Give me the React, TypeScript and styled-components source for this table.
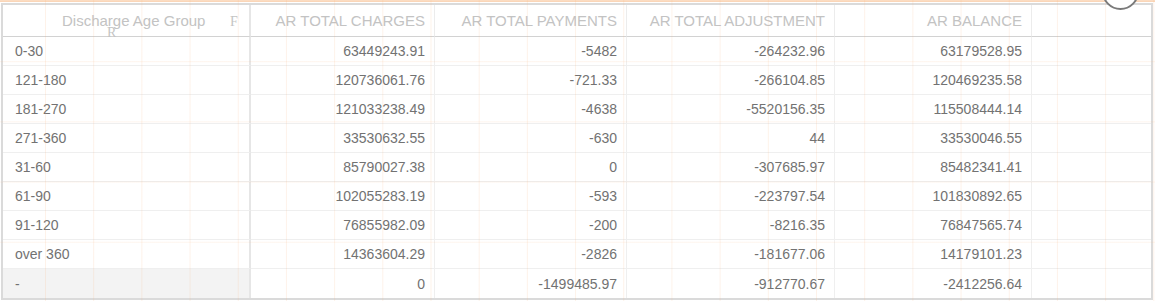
import React from "react";
import styled, { createGlobalStyle } from "styled-components";

const GlobalStyle = createGlobalStyle`
  html, body { margin: 0; padding: 0; background: #ffffff; }
  body { font-family: "Liberation Sans", Arial, sans-serif; }
`;

const Canvas = styled.div`
  position: relative;
  width: 1155px;
  height: 301px;
  overflow: hidden;
  background: #ffffff;
  padding: 3px 0 0 1px;
  box-sizing: border-box;

  &::after {
    content: "";
    position: absolute;
    inset: 0;
    pointer-events: none;
    background-image:
      linear-gradient(to right, rgba(248, 170, 110, 0.15) 1px, transparent 1px),
      linear-gradient(to bottom, rgba(248, 170, 110, 0.12) 1px, transparent 1px);
    background-size: 48.2px 100%, 100% 60.2px;
    background-position: 45px 0, 0 1px;
    box-shadow: inset 0 2px 0 rgba(246, 178, 120, 0.45);
  }
`;

const Visual = styled.div`
  width: 1152px;
  height: 297px;
  box-sizing: border-box;
  border: 2px solid #dadada;
  overflow: hidden;
`;

const Table = styled.div`
  display: grid;
  grid-template-columns: 248px 184px 192px 208px 197px 1fr;
  grid-template-rows: 32px repeat(9, 29px);
`;

const HeaderCell = styled.div<{ $align: "left" | "right"; $first?: boolean }>`
  position: relative;
  box-sizing: border-box;
  display: flex;
  align-items: center;
  justify-content: ${(p) => (p.$align === "right" ? "flex-end" : "flex-start")};
  padding: ${(p) => (p.$first ? "0 0 0 59px" : "0 9px 0 0")};
  border-bottom: 1px solid #d2d2d2;
  border-right: ${(p) => (p.$first ? "2px solid #e6e6e6" : "1px solid #ececec")};
  font-size: 15px;
  line-height: 15px;
  color: #c3c3c3;
  white-space: nowrap;
`;

const LastHeader = styled.div`
  border-bottom: 1px solid #d2d2d2;
`;

const SortGlyph = styled.span<{ $x: number; $y: number }>`
  position: absolute;
  left: ${(p) => p.$x}px;
  top: ${(p) => p.$y}px;
  font-family: "Liberation Serif", "Times New Roman", serif;
  font-size: 14px;
  line-height: 9px;
  color: #c4c4c4;
`;

const Cell = styled.div<{ $align: "left" | "right"; $first?: boolean; $shade?: boolean; $last?: boolean }>`
  box-sizing: border-box;
  display: flex;
  align-items: center;
  justify-content: ${(p) => (p.$align === "right" ? "flex-end" : "flex-start")};
  padding: ${(p) => (p.$first ? "0 0 0 12px" : "0 9px 0 0")};
  border-bottom: ${(p) => (p.$last ? "none" : "1px solid #efefef")};
  border-right: ${(p) => (p.$first ? "2px solid #e6e6e6" : "1px solid #efefef")};
  background: ${(p) => (p.$shade ? "#f3f3f3" : "transparent")};
  font-size: 14px;
  color: #727272;
  white-space: nowrap;
`;

const SpacerCell = styled.div<{ $last?: boolean }>`
  border-bottom: ${(p) => (p.$last ? "none" : "1px solid #efefef")};
`;

const CloseRing = styled.div`
  position: absolute;
  left: 1102px;
  top: -27px;
  width: 33px;
  height: 33px;
  border: 2px solid #7a7a7a;
  border-radius: 50%;
  background: #ffffff;
  z-index: 2;
`;

const headers = [
  "AR TOTAL CHARGES",
  "AR TOTAL PAYMENTS",
  "AR TOTAL ADJUSTMENT",
  "AR BALANCE",
];

const rows: [string, string, string, string, string][] = [
  ["0-30", "63449243.91", "-5482", "-264232.96", "63179528.95"],
  ["121-180", "120736061.76", "-721.33", "-266104.85", "120469235.58"],
  ["181-270", "121033238.49", "-4638", "-5520156.35", "115508444.14"],
  ["271-360", "33530632.55", "-630", "44", "33530046.55"],
  ["31-60", "85790027.38", "0", "-307685.97", "85482341.41"],
  ["61-90", "102055283.19", "-593", "-223797.54", "101830892.65"],
  ["91-120", "76855982.09", "-200", "-8216.35", "76847565.74"],
  ["over 360", "14363604.29", "-2826", "-181677.06", "14179101.23"],
  ["-", "0", "-1499485.97", "-912770.67", "-2412256.64"],
];

export default function App() {
  return (
    <>
      <GlobalStyle />
      <Canvas>
        <CloseRing />
        <Visual>
          <Table>
            <HeaderCell $align="left" $first>
              Discharge Age Group
              <SortGlyph $x={227} $y={12}>F</SortGlyph>
              <SortGlyph $x={104} $y={23}>R</SortGlyph>
            </HeaderCell>
            {headers.map((h) => (
              <HeaderCell key={h} $align="right">
                {h}
              </HeaderCell>
            ))}
            <LastHeader />
            {rows.map((r, i) => {
              const last = i === rows.length - 1;
              return (
                <React.Fragment key={r[0]}>
                  <Cell $align="left" $first $shade={last} $last={last}>
                    {r[0]}
                  </Cell>
                  {r.slice(1).map((v, j) => (
                    <Cell key={j} $align="right" $last={last}>
                      {v}
                    </Cell>
                  ))}
                  <SpacerCell $last={last} />
                </React.Fragment>
              );
            })}
          </Table>
        </Visual>
      </Canvas>
    </>
  );
}
